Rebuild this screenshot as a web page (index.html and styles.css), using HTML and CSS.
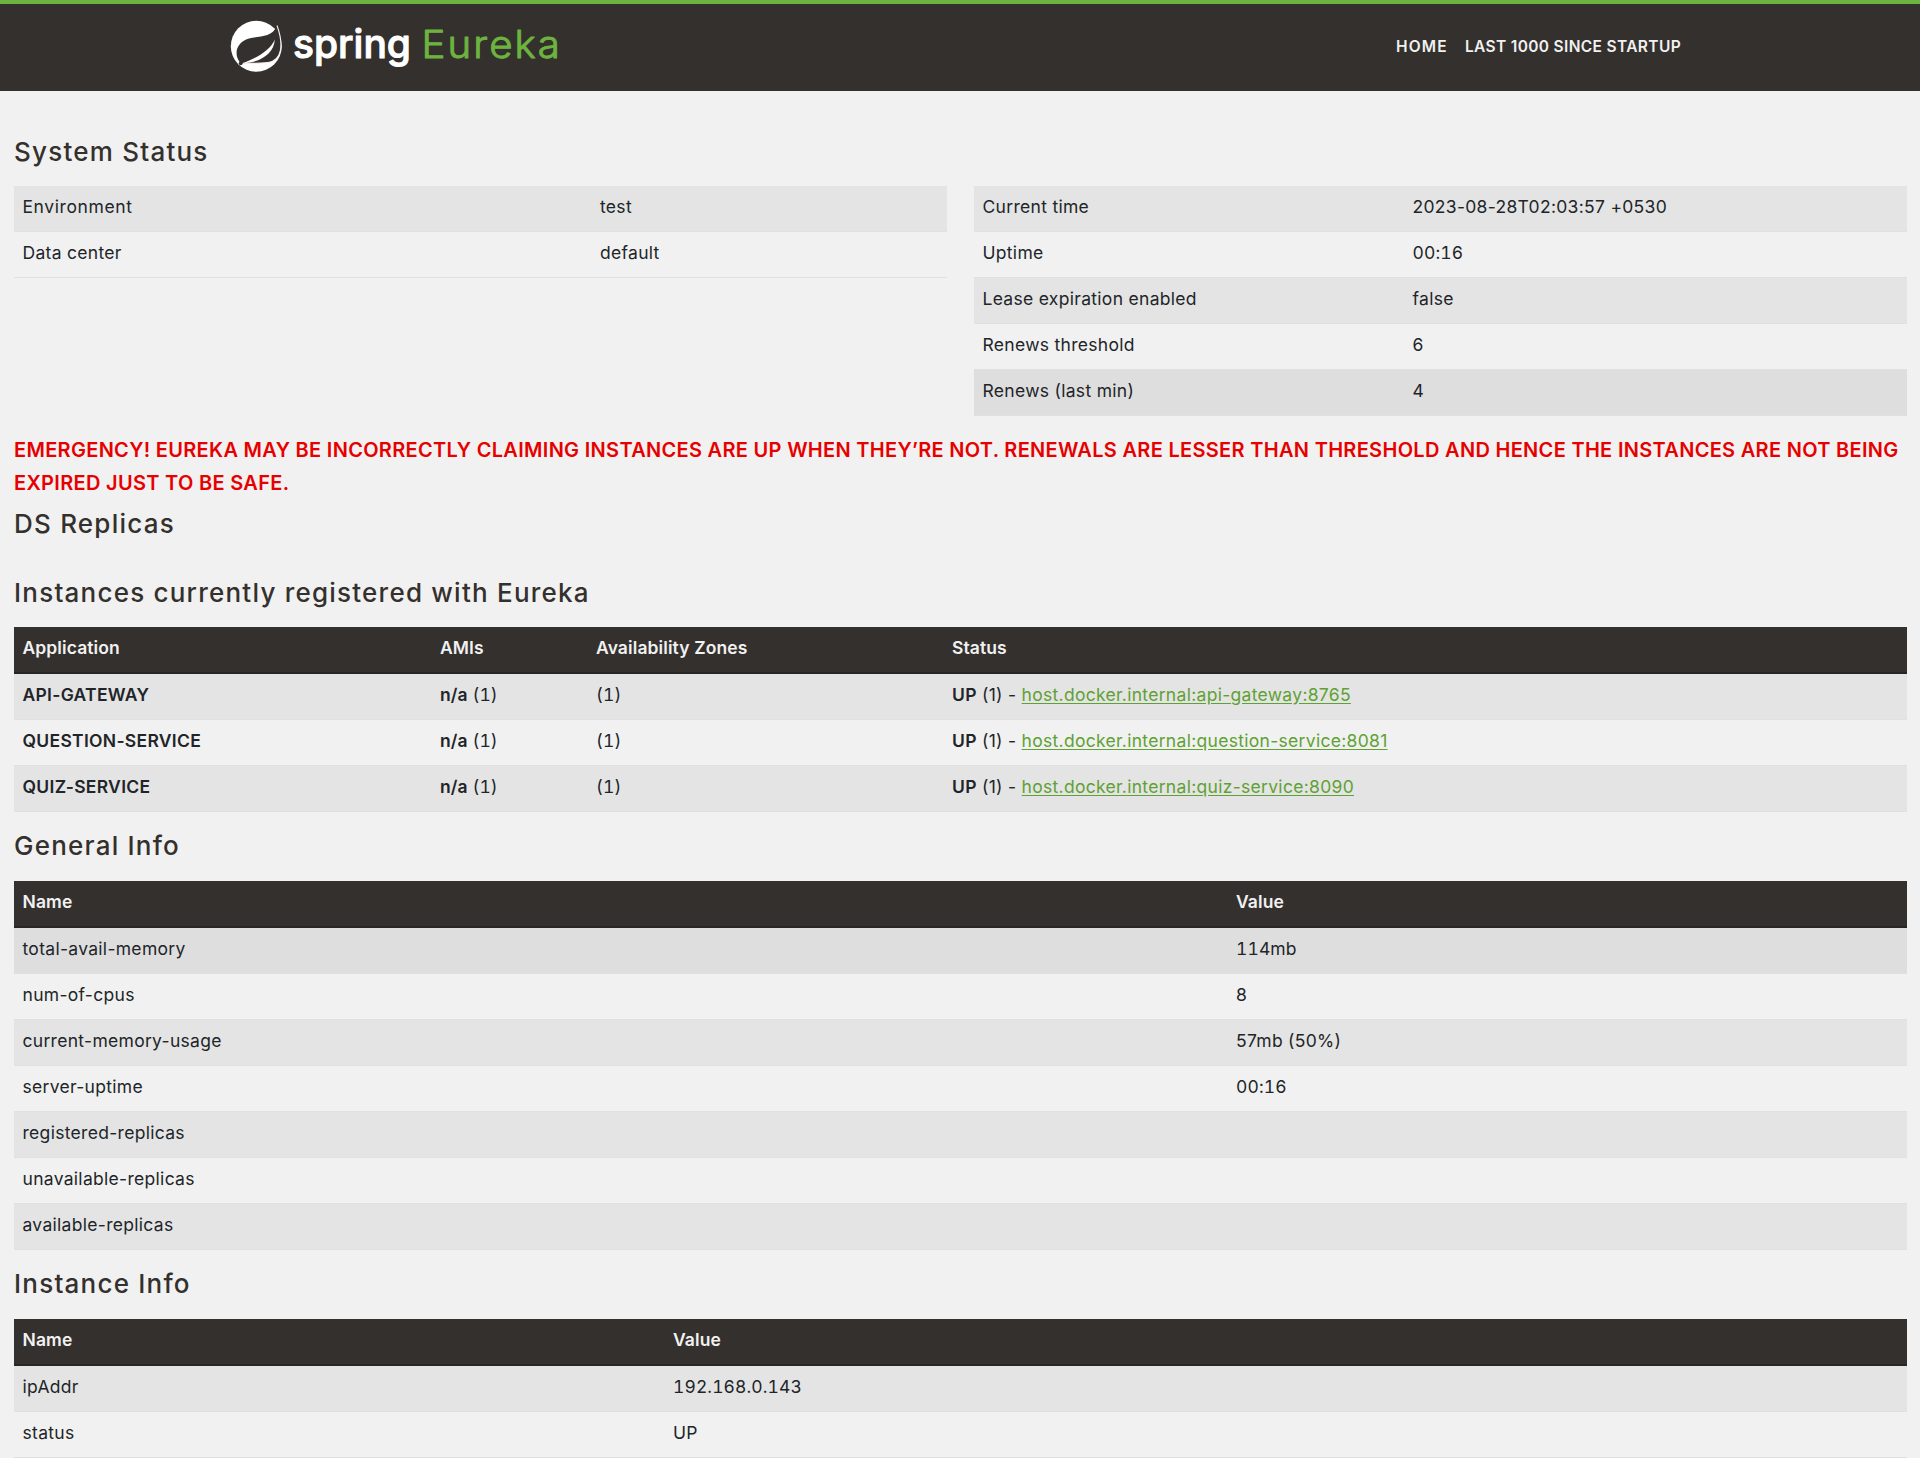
FILE: index.html
```html
<!DOCTYPE html>
<html lang="en">
<head>
<meta charset="utf-8">
<title>Eureka</title>
<link rel="stylesheet" href="styles.css">
</head>
<body>
<header class="navbar">
  <a class="brand" href="#">
    <svg class="logo" viewBox="0 0 350 80" width="350" height="80" role="img" aria-label="spring Eureka">
      <circle cx="36.300" cy="42.300" r="25.500" fill="#fff"/>
      <path d="M57 21.500C52 34 40 31.500 29 34.500C15.500 38.500 13.500 51 20.500 59C28 59.500 39 59.500 48 58.500C62 56.500 64 41 57 21.500Z" fill="#34302d"/>
      <path d="M57 21.500C64 41 62 56.500 48 58.500C40 59.500 30 59.500 23 59.300" fill="none" stroke="#f1f1f1" stroke-width="1.100"/>
      <path d="M54.800 35.500C50 46.500 38 53 23 59.300C40 58.500 54 50 54.800 35.500Z" fill="#fff"/>
      <circle cx="20.700" cy="59.300" r="1.900" fill="#34302d"/>
      <text class="word-spring" x="73" y="54" textLength="118" lengthAdjust="spacingAndGlyphs">spring</text>
      <text class="word-eureka" x="201.500" y="54" textLength="140.500" lengthAdjust="spacingAndGlyphs">Eureka</text>
    </svg>
  </a>
  <nav class="menu"><a class="home" href="#">HOME</a><a class="last" href="#">LAST 1000 SINCE STARTUP</a></nav>
</header>
<main class="content">
  <h1 class="title">System Status</h1>
  <div class="status">
    <table class="table env">
      <tr><td class="wide">Environment</td><td>test</td></tr>
      <tr><td>Data center</td><td>default</td></tr>
    </table>
    <table class="table current">
      <tr><td>Current time</td><td>2023-08-28T02:03:57 +0530</td></tr>
      <tr><td>Uptime</td><td class="num">00:16</td></tr>
      <tr><td>Lease expiration enabled</td><td>false</td></tr>
      <tr><td>Renews threshold</td><td>6</td></tr>
      <tr class="dark"><td>Renews (last min)</td><td>4</td></tr>
    </table>
  </div>
  <p class="warning">EMERGENCY! EUREKA MAY BE INCORRECTLY CLAIMING INSTANCES ARE UP WHEN THEY’RE NOT. RENEWALS ARE LESSER THAN THRESHOLD AND HENCE THE INSTANCES ARE NOT BEING EXPIRED JUST TO BE SAFE.</p>
  <h1 class="title replicas">DS Replicas</h1>
  <h1 class="title">Instances currently registered with Eureka</h1>
  <table class="table instances">
    <thead><tr><th>Application</th><th>AMIs</th><th>Availability Zones</th><th>Status</th></tr></thead>
    <tbody>
      <tr><td><b>API-GATEWAY</b></td><td class="num"><b>n/a</b> (1)</td><td class="num">(1)</td><td><b>UP</b> (1) - <a href="#">host.docker.internal:api-gateway:8765</a></td></tr>
      <tr><td><b>QUESTION-SERVICE</b></td><td class="num"><b>n/a</b> (1)</td><td class="num">(1)</td><td><b>UP</b> (1) - <a href="#">host.docker.internal:question-service:8081</a></td></tr>
      <tr><td><b>QUIZ-SERVICE</b></td><td class="num"><b>n/a</b> (1)</td><td class="num">(1)</td><td><b>UP</b> (1) - <a href="#">host.docker.internal:quiz-service:8090</a></td></tr>
    </tbody>
  </table>
  <h1 class="title section">General Info</h1>
  <table class="table general">
    <thead><tr><th>Name</th><th>Value</th></tr></thead>
    <tbody>
      <tr class="dark"><td>total-avail-memory</td><td class="num">114mb</td></tr>
      <tr><td>num-of-cpus</td><td>8</td></tr>
      <tr><td>current-memory-usage</td><td>57mb (50%)</td></tr>
      <tr><td>server-uptime</td><td class="num">00:16</td></tr>
      <tr><td>registered-replicas</td><td></td></tr>
      <tr><td>unavailable-replicas</td><td></td></tr>
      <tr><td>available-replicas</td><td></td></tr>
    </tbody>
  </table>
  <h1 class="title section">Instance Info</h1>
  <table class="table instance">
    <thead><tr><th>Name</th><th>Value</th></tr></thead>
    <tbody>
      <tr><td>ipAddr</td><td class="num">192.168.0.143</td></tr>
      <tr><td>status</td><td>UP</td></tr>
    </tbody>
  </table>
</main>
</body>
</html>
```
FILE: styles.css
```css
* { box-sizing: border-box; }
body {
  margin: 0;
  background: #f1f1f1;
  color: #212529;
  font: 400 17.5px/27px Inter, sans-serif;
}
.navbar {
  display: flex;
  justify-content: space-between;
  height: 91px;
  padding: 0 239px 0 220px;
  border-top: 4px solid #6db33f;
  background: #34302d;
}
.logo { display: block; }
.word-spring {
  font: 500 40px Inter, sans-serif;
  fill: #fff;
  stroke: #fff;
  stroke-width: 1;
  stroke-linejoin: round;
}
.word-eureka {
  font: 300 38px Inter, sans-serif;
  letter-spacing: 2px;
  fill: #6db33f;
  stroke: #6db33f;
  stroke-width: 1;
  stroke-linejoin: round;
}
.menu { display: flex; gap: 17px; padding-top: 29px; }
.menu a {
  color: #f1f1f1;
  font-size: 15.5px;
  font-weight: 600;
  letter-spacing: 0.35px;
  text-decoration: none;
  white-space: nowrap;
}
.menu .home { letter-spacing: 1.2px; }
.content { padding: 44px 13px 0 14px; }
.title {
  margin: 0 0 18px;
  color: #34302d;
  font-size: 26px;
  font-weight: 450;
  line-height: 33px;
  letter-spacing: 1.22px;
}
.title.replicas { margin: 7px 0 36px; }
.title.section { margin: 17px 0 19px; }
.status { display: flex; align-items: flex-start; gap: 27px; height: 230px; }
.table {
  width: 100%;
  table-layout: fixed;
  border-collapse: separate;
  border-spacing: 0;
}
.table td, .table th {
  height: 46px;
  padding: 7px 9px 11px 8.5px;
  border-bottom: 1px solid #dfe0e1;
  letter-spacing: 0.3px;
  text-align: left;
  white-space: nowrap;
}
.table th {
  height: 47px;
  border-bottom: 2px solid #262626;
  background: #34302d;
  color: #f1f1f1;
  font-weight: 600;
  letter-spacing: 0.1px;
}
.table tr:nth-child(odd) td { background: #e4e4e4; }
.table tr.dark td { background: #dedede; }
.table .num { font-variant-numeric: tabular-nums; letter-spacing: 0.1px; }
.table .wide { letter-spacing: 0.6px; }
.table b { font-weight: 600; }
.table a { color: #5fa134; text-underline-offset: 2px; }
.env td:first-child { width: 577.5px; }
.current td:first-child { width: 430px; }
.instances th:nth-child(1) { width: 417.5px; }
.instances th:nth-child(2) { width: 156px; }
.instances th:nth-child(3) { width: 356px; }
.general th:first-child { width: 1213.5px; }
.instance th:first-child { width: 650.5px; }
.warning {
  margin: 18px 0 0;
  color: #e60000;
  font-size: 20px;
  font-weight: 600;
  line-height: 33px;
  letter-spacing: 0.305px;
}
```
